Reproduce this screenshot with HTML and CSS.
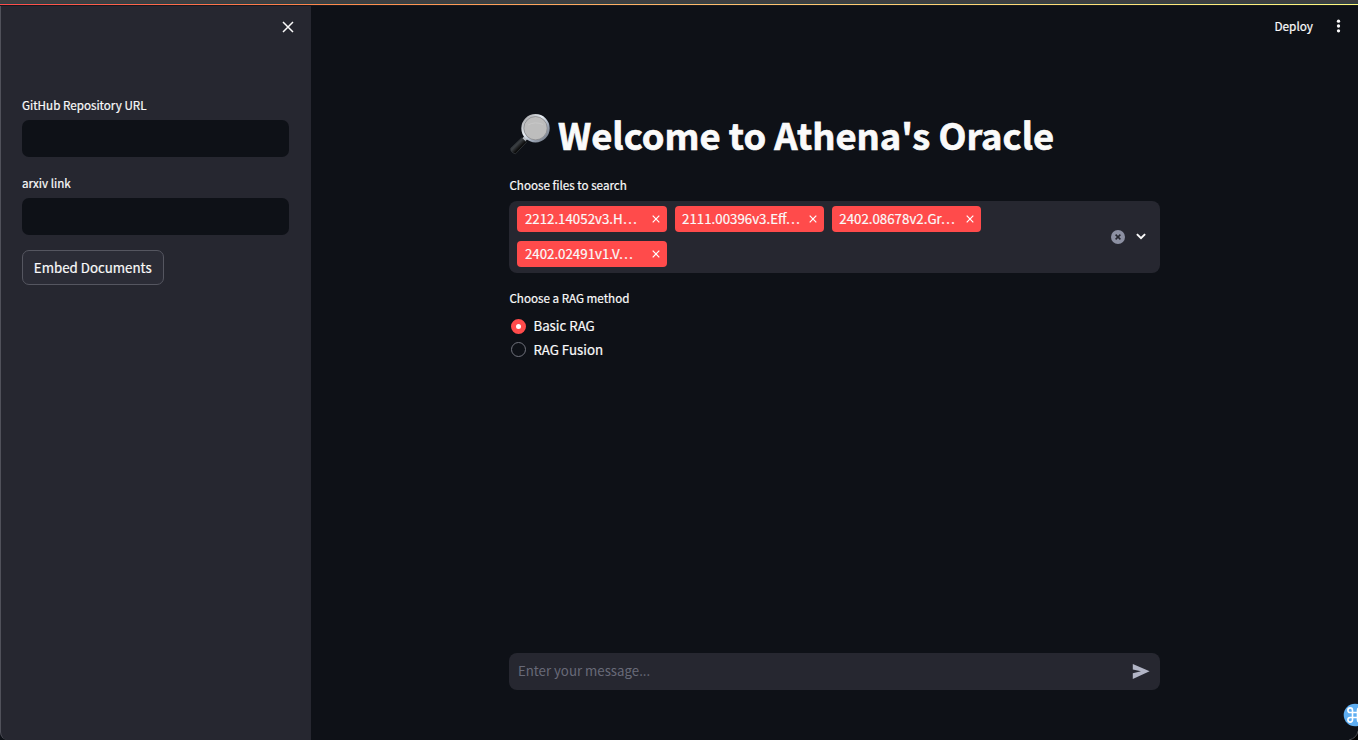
FILE: index.html
```html
<!DOCTYPE html>
<html lang="en">
<head>
<meta charset="utf-8">
<title>Athena's Oracle</title>
<link rel="stylesheet" href="styles.css">
</head>
<body>
<div class="window">
  <div class="decoration"></div>
  <div class="app">
    <aside class="sidebar">
      <button class="close" aria-label="Close sidebar"><svg width="12" height="12" viewBox="0 0 12 12"><path d="M1 1 11 11M11 1 1 11" stroke="#fafafa" stroke-width="1.5" fill="none"/></svg></button>
      <label class="label"><span>GitHub Repository URL</span></label>
      <div class="field"></div>
      <label class="label second"><span>arxiv link</span></label>
      <div class="field"></div>
      <button class="embed"><span>Embed Documents</span></button>
    </aside>
    <main class="main">
      <header class="toolbar">
        <span class="deploy">Deploy</span>
        <svg width="5" height="14" viewBox="0 0 5 14" fill="#fafafa"><circle cx="2.5" cy="2.2" r="1.65"/><circle cx="2.5" cy="7" r="1.65"/><circle cx="2.5" cy="11.8" r="1.65"/></svg>
      </header>
      <div class="content">
        <h1 class="title">
          <svg class="glass" width="42" height="42" viewBox="0 0 42 42">
            <defs>
              <linearGradient id="rim" x1="0" y1="0" x2="1" y2="1"><stop offset="0" stop-color="#9a9a9c"/><stop offset=".4" stop-color="#e8eef4"/><stop offset=".7" stop-color="#9aa4b4"/><stop offset="1" stop-color="#6c727c"/></linearGradient>
              <linearGradient id="grip" x1="0" y1="0" x2="1" y2="1"><stop offset="0" stop-color="#000"/><stop offset=".4" stop-color="#3c4044"/><stop offset=".6" stop-color="#0a0a0a"/><stop offset="1" stop-color="#333"/></linearGradient>
            </defs>
            <path d="M14.5 24 17.5 27" stroke="#b8bcc2" stroke-width="4"/>
            <path d="M12.5 25 1.8 35.2Q1.2 39.5 6.5 40.8L17.5 29.2Z" fill="url(#grip)" stroke="#34383c" stroke-width=".8"/>
            <circle cx="26.5" cy="15.2" r="13" fill="#bdbdbd" stroke="url(#rim)" stroke-width="2.4"/>
            <circle cx="26.5" cy="15.2" r="11.7" fill="none" stroke="#77777b" stroke-width=".6"/>
            <path d="M19 12Q26 8 34 11.5" stroke="#c8c8c8" stroke-width="1" fill="none"/>
          </svg>
          <span>Welcome to Athena's Oracle</span>
        </h1>
        <label class="label"><span>Choose files to search</span></label>
        <div class="select">
          <div class="tags">
            <div class="tag"><span>2212.14052v3.H…</span><svg width="8" height="8" viewBox="0 0 8 8"><path d="M.7.7 7.3 7.3M7.3.7.7 7.3"/></svg></div>
            <div class="tag"><span>2111.00396v3.Eff…</span><svg width="8" height="8" viewBox="0 0 8 8"><path d="M.7.7 7.3 7.3M7.3.7.7 7.3"/></svg></div>
            <div class="tag"><span>2402.08678v2.Gr…</span><svg width="8" height="8" viewBox="0 0 8 8"><path d="M.7.7 7.3 7.3M7.3.7.7 7.3"/></svg></div>
            <div class="tag"><span>2402.02491v1.V…</span><svg width="8" height="8" viewBox="0 0 8 8"><path d="M.7.7 7.3 7.3M7.3.7.7 7.3"/></svg></div>
          </div>
          <svg class="clear" width="14" height="14" viewBox="0 0 14 14"><circle cx="7" cy="7" r="7" fill="#8c90a2"/><path d="M4.6 4.6 9.4 9.4M9.4 4.6 4.6 9.4" stroke="#262730" stroke-width="1.5"/></svg>
          <svg class="chevron" width="10" height="7" viewBox="0 0 10 7"><path d="M.9 1.1 5 5.1 9.1 1.1" stroke="#fafafa" stroke-width="2" fill="none"/></svg>
        </div>
        <label class="label method"><span>Choose a RAG method</span></label>
        <div class="radio"><i class="dot on"></i><span>Basic RAG</span></div>
        <div class="radio"><i class="dot"></i><span>RAG Fusion</span></div>
        <div class="chat"><span>Enter your message...</span>
          <svg width="18" height="16" viewBox="0 0 18 16"><path d="M.8.9 17.6 8.3.8 15.9V10.2L9 8.3.8 6.6Z" fill="#b2b5c6"/></svg>
        </div>
      </div>
    </main>
  </div>
  <svg class="badge" width="24" height="24" viewBox="0 0 24 24"><circle cx="12" cy="12" r="11.3" fill="#5eaef2"/><path d="M9.5 9.5V7.2A2.3 2.3 0 1 0 7.2 9.5H16.8A2.3 2.3 0 1 0 14.5 7.2V16.8A2.3 2.3 0 1 0 16.8 14.5H7.2A2.3 2.3 0 1 0 9.5 16.8Z" fill="none" stroke="#fff" stroke-width="1.6"/></svg>
  <svg class="corner" width="12" height="12" viewBox="0 0 12 12"><path d="M12 3Q11 10 3 12H12Z" fill="#000"/><path d="M12 3Q11 10 3 12" fill="none" stroke="#4a4b50"/></svg>
</div>
</body>
</html>
```
FILE: styles.css
```css
* { box-sizing: border-box; }
body {
  margin: 0;
  background: #0e1117;
  color: #fafafa;
  font-family: "Noto Sans CJK SC", "Noto Sans", sans-serif;
  font-weight: 400;
}
button { padding: 0; border: 0; background: none; color: inherit; font: inherit; }
svg { display: block; flex: none; }
span { white-space: nowrap; -webkit-text-stroke: 0.2px currentColor; }
.window {
  position: relative;
  height: 740px;
  overflow: hidden;
  display: flex;
  flex-direction: column;
  border-top: 3px solid #3d3e40;
  background: #0e1117;
}
.decoration {
  height: 3px;
  border-top: 1px solid #2c4248;
  border-bottom: 1px solid #17191d;
  background: linear-gradient(90deg, #ff4b4b, #ff8a4c 25%, #ffc070 55%, #fff880) border-box;
  background-clip: padding-box;
}
.app { flex: 1; display: flex; }
.sidebar {
  width: 311px;
  padding: 15px 22px 0 21px;
  display: flex;
  flex-direction: column;
  align-items: flex-start;
  background: #262730;
  border-left: 1px solid #50515a;
  border-bottom-left-radius: 8px;
}
.close { align-self: flex-end; margin-right: -5px; height: 12px; }
.label { display: block; height: 20px; line-height: 20px; font-size: 11.65px; }
.sidebar .label { margin-top: 62px; }
.sidebar .label.second { margin-top: 16px; }
.field { width: 266.5px; height: 37.5px; margin-top: 4.5px; border-radius: 7px; background: #0e1117; }
.embed {
  width: 141.5px;
  height: 35px;
  margin-top: 14.5px;
  border: 1px solid #555660;
  border-radius: 7px;
  background: #2b2c36;
  font-size: 13.3px;
  line-height: 33px;
  text-align: center;
}
.main { flex: 1; }
.toolbar { height: 40px; padding-right: 17px; display: flex; justify-content: flex-end; align-items: center; gap: 23px; font-size: 11.8px; }
.toolbar span { padding-bottom: 2px; }
.content { width: 650.5px; margin-left: 198.4px; }
.title { height: 46px; margin: 65px 0 0; display: flex; align-items: center; gap: 7.5px; font-size: 36.3px; font-weight: 700; line-height: 46px; }
.title .glass { margin-left: -0.9px; }
.title span { -webkit-text-stroke: 0.7px currentColor; }
.content .label { margin-top: 18px; }
.select { display: flex; align-items: center; height: 72px; margin-top: 5.5px; padding: 0 14px 0 8px; border-radius: 8px; background: #262730; }
.tags { flex: 1; display: flex; flex-wrap: wrap; gap: 9px 7.5px; }
.tag { width: 149.7px; height: 26px; padding: 0 7.5px; display: flex; align-items: center; justify-content: space-between; border-radius: 4px; background: #ff4b4b; font-size: 13.3px; line-height: 20px; }
.tag span { padding-bottom: 1px; }
.tag path { stroke: #fff; stroke-width: 1.2; }
.chevron { margin-left: 11px; }
.content .method { margin-top: 15.5px; margin-bottom: 6.5px; }
.radio { height: 23.5px; display: flex; align-items: center; gap: 7.5px; padding-left: 1.5px; font-size: 13.3px; }
.radio span { padding-bottom: 1px; }
.dot { width: 15px; height: 15px; border-radius: 50%; border: 1px solid #70727c; }
.dot.on { border: 5px solid #ff4b4b; background: #fff; }
.chat { display: flex; align-items: center; justify-content: space-between; height: 37px; margin-top: 291px; padding: 0 9.5px 0 8.5px; border-radius: 8px; background: #262730; color: #686a78; font-size: 13.25px; }
.chat span { padding-bottom: 1px; -webkit-text-stroke: 0; }
.badge { position: absolute; left: 1343px; top: 700px; }
.corner { position: absolute; right: 0; bottom: 0; }
```
